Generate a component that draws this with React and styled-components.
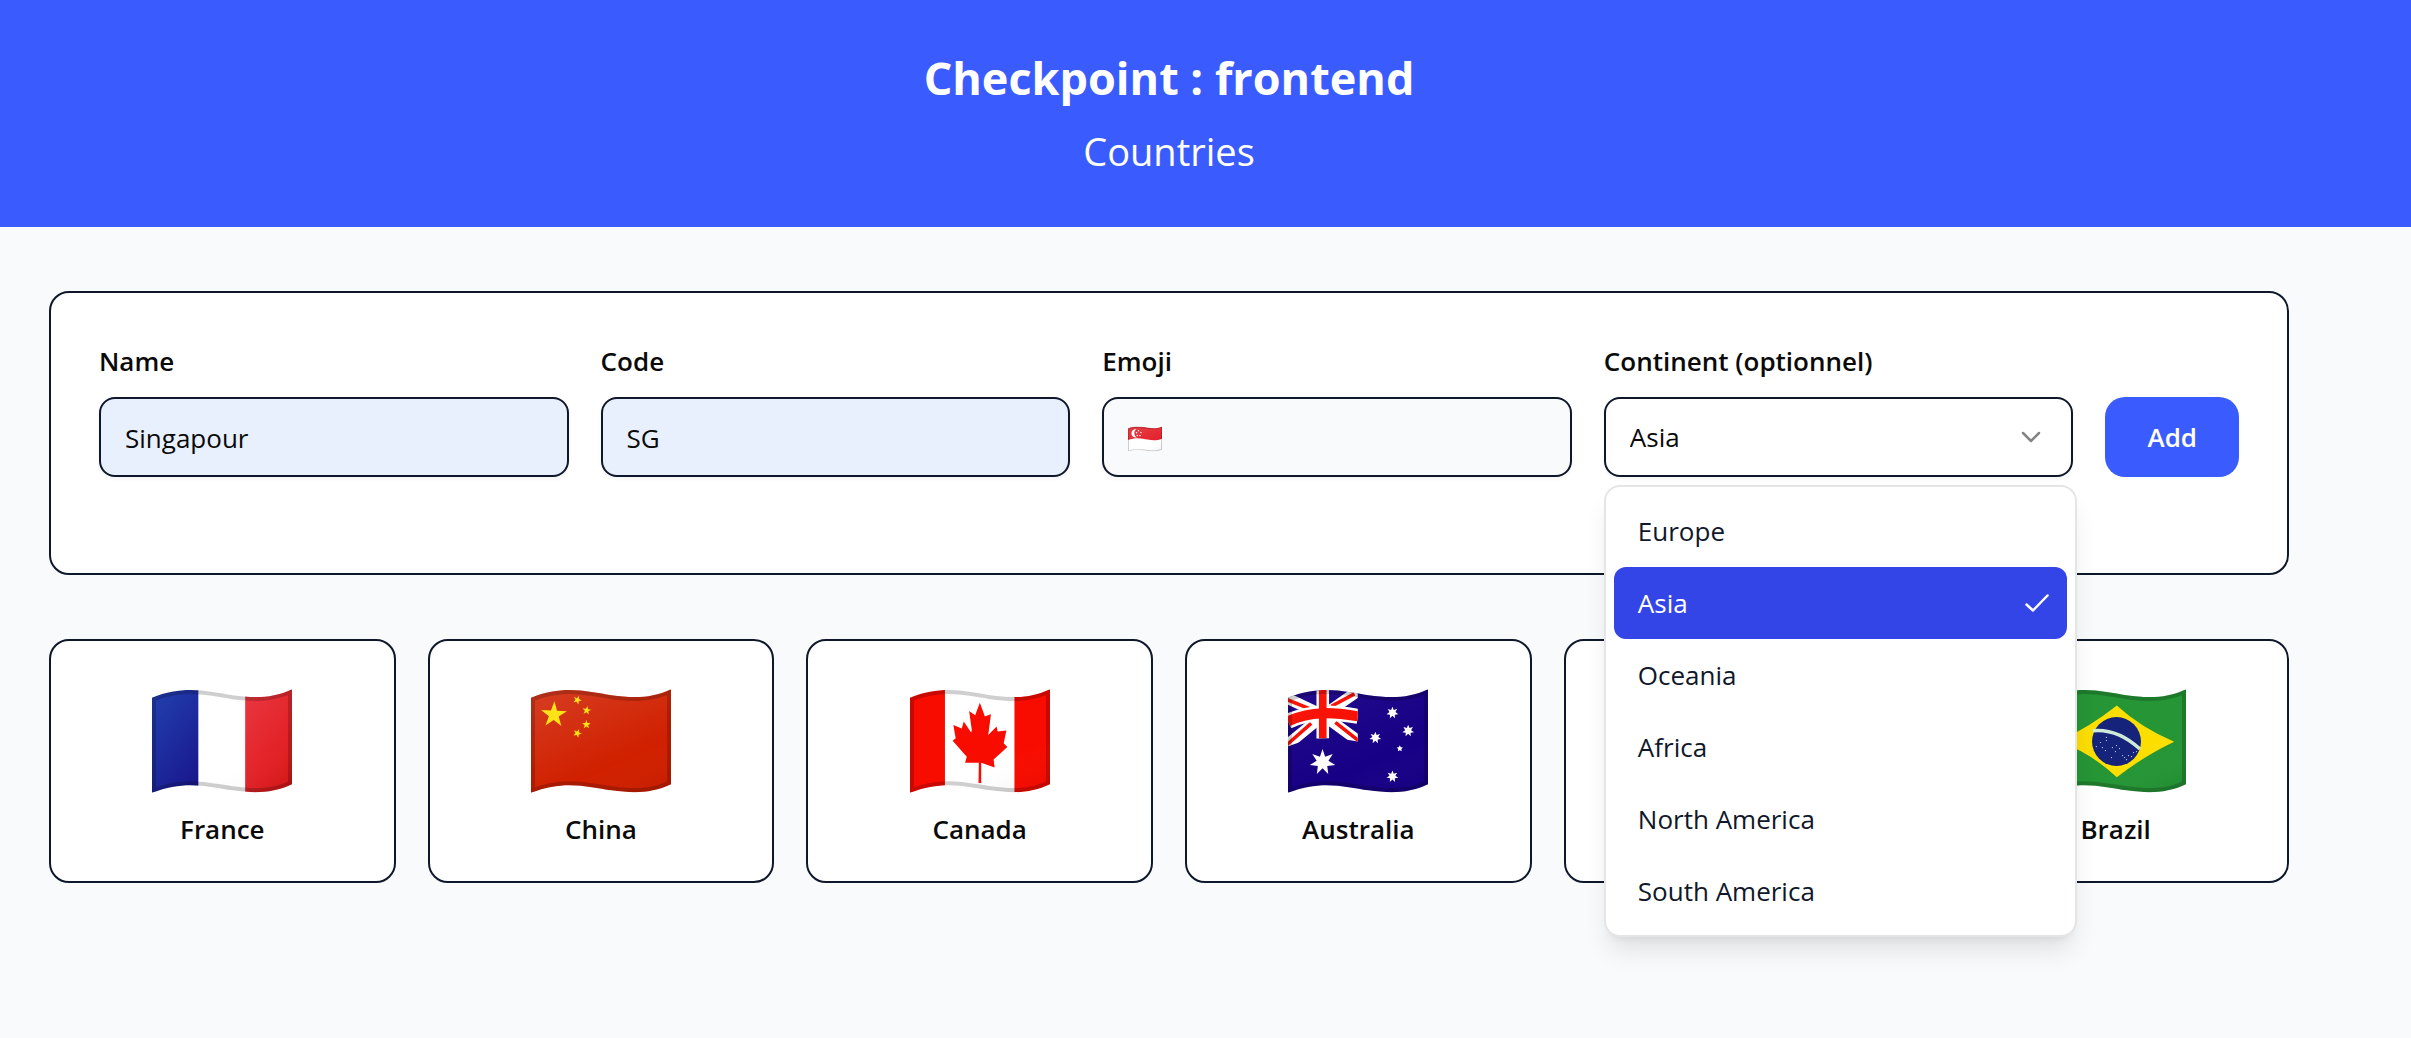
import React, { useId, useState } from "react";
import styled, { createGlobalStyle, css } from "styled-components";

const GlobalStyle = createGlobalStyle`
  *, *::before, *::after { box-sizing: border-box; }
  body {
    margin: 0;
    min-height: 100vh;
    background: #f8fafc;
    color: #0a0a0a;
    font-family: "Open Sans", "Noto Sans", sans-serif;
    font-size: 26px;
    line-height: 40px;
  }
  button, input, select { font: inherit; color: inherit; }
`;

const Page = styled.div`
  min-height: 100vh;
`;

const Header = styled.header`
  display: flex;
  flex-direction: column;
  align-items: center;
  gap: 8px;
  padding: 44px 73px 44px 0;
  background: #3a5cff;
  color: #fff;
`;

const Title = styled.h1`
  margin: 0;
  font-size: 45px;
  line-height: 68px;
  font-weight: 700;
`;

const Subtitle = styled.p`
  margin: 0;
  font-size: 38px;
  line-height: 63px;
`;

const Main = styled.main`
  display: flex;
  flex-direction: column;
  gap: 64px;
  padding: 64px 122px 64px 49px;
`;

const panel = css`
  background: #fff;
  border: 2px solid #0f172a;
  border-radius: 20px;
`;

const Form = styled.form`
  ${panel}
  display: flex;
  align-items: flex-end;
  gap: 32px;
  padding: 48px 48px 96px;
`;

const Field = styled.div`
  position: relative;
  display: flex;
  flex: 1 1 0;
  flex-direction: column;
  gap: 16px;
  min-width: 0;
`;

const Label = styled.label`
  font-weight: 600;
`;

const fieldBox = css`
  width: 100%;
  height: 80px;
  border: 2px solid #0f172a;
  border-radius: 16px;
  box-shadow: 0 2px 4px rgba(0, 0, 0, 0.05);
`;

const TextInput = styled.input`
  ${fieldBox}
  padding: 2px 24px 0;
  background: #e8f0fe;
  outline: none;
`;

const FlagField = styled.div`
  ${fieldBox}
  display: flex;
  align-items: center;
  gap: 8px;
  padding: 4px 24px 0;
  background: #f8fafc;
`;

const BareInput = styled.input`
  flex: 1;
  min-width: 0;
  border: 0;
  padding: 0;
  background: none;
  outline: none;
`;

const SelectBox = styled.div`
  display: grid;
  align-items: center;
  > * { grid-area: 1 / 1; }
`;

const Select = styled.select`
  ${fieldBox}
  appearance: none;
  padding: 0 64px 0 24px;
  background: #fff;
  outline: none;
`;

const Chevron = styled.svg`
  justify-self: end;
  margin: 0 32px 0 0;
  width: 20px;
  height: 12px;
  pointer-events: none;
`;

const Menu = styled.ul`
  position: absolute;
  z-index: 1;
  top: calc(100% + 8px);
  left: 0;
  width: calc(100% + 4px);
  margin: 0;
  padding: 8px;
  list-style: none;
  color: #0f172a;
  background: #fff;
  border: 2px solid #e5e5e5;
  border-radius: 16px;
  box-shadow: 0 18px 26px -5px rgba(0, 0, 0, 0.1), 0 7px 10px -7px rgba(0, 0, 0, 0.1);
`;

const Option = styled.li`
  display: flex;
  align-items: center;
  justify-content: space-between;
  height: 72px;
  padding: 0 18px 0 24px;
  border-radius: 12px;
  cursor: pointer;
  color: ${(p) => (p.$active ? "#fff" : "inherit")};
  background: ${(p) => (p.$active ? "#3445e7" : "transparent")};
`;

const AddButton = styled.button`
  flex: none;
  height: 80px;
  padding: 0 42px;
  border: 0;
  border-radius: 20px;
  background: #3a5cff;
  color: #fff;
  font-weight: 600;
`;

const Grid = styled.section`
  display: grid;
  grid-template-columns: repeat(6, minmax(0, 1fr));
  gap: 32px;
`;

const Card = styled.article`
  ${panel}
  display: flex;
  flex-direction: column;
  align-items: center;
  gap: 16px;
  padding: 48px 0 32px;
  font-weight: 600;
`;

const FlagSvg = styled.svg`
  flex: none;
  display: block;
  width: ${(p) => (p.$small ? "34px" : "140px")};
  height: ${(p) => (p.$small ? "26px" : "104px")};
`;

const WAVE =
  "M0 8.5C33 -5 58 3 80 6S120 9 139 0V94.5C120 103.5 102 103.5 80 100.5S33 89.5 0 103Z";

function star(cx, cy, r, points, ratio, turn = 0) {
  return Array.from({ length: points * 2 }, (_, i) => {
    const a = (Math.PI * i) / points - Math.PI / 2 + turn;
    const d = i % 2 ? r * ratio : r;
    return `${(cx + d * Math.cos(a)).toFixed(2)},${(cy + d * Math.sin(a)).toFixed(2)}`;
  }).join(" ");
}

function Flag({ small, shine = 0.12, children }) {
  const id = useId();
  return (
    <FlagSvg $small={small} viewBox="0 0 139 103" aria-hidden="true">
      <defs>
        <clipPath id={`${id}c`}>
          <path d={WAVE} />
        </clipPath>
        <linearGradient id={`${id}g`} x1="0.2" y1="0" x2="0.8" y2="1">
          <stop offset="0" stopColor="#fff" stopOpacity={shine} />
          <stop offset="0.7" stopColor="#fff" stopOpacity="0" />
          <stop offset="1" stopColor="#000" stopOpacity="0.04" />
        </linearGradient>
      </defs>
      <g clipPath={`url(#${id}c)`}>
        {children}
        <path d={WAVE} fill={`url(#${id}g)`} />
        <path d={WAVE} fill="none" stroke="#000" strokeOpacity="0.19" strokeWidth="8" />
      </g>
    </FlagSvg>
  );
}

function France() {
  const id = useId();
  return (
    <Flag shine={0}>
      <defs>
        <linearGradient id={`${id}b`} x1="0.2" y1="0" x2="0.8" y2="1">
          <stop offset="0" stopColor="#213eae" />
          <stop offset="1" stopColor="#19178c" />
        </linearGradient>
        <linearGradient id={`${id}r`} x1="0.2" y1="0" x2="0.8" y2="1">
          <stop offset="0" stopColor="#e9353f" />
          <stop offset="1" stopColor="#de1819" />
        </linearGradient>
      </defs>
      <rect width="139" height="103" fill="#fff" />
      <rect width="46" height="103" fill={`url(#${id}b)`} />
      <rect x="92.5" width="47" height="103" fill={`url(#${id}r)`} />
    </Flag>
  );
}

function China() {
  return (
    <Flag>
      <rect width="139" height="103" fill="#d02000" />
      <g fill="#ffe000">
        <polygon points={star(22.7, 25.5, 13.5, 5, 0.38, 0.04)} />
        <polygon points={star(46, 10.8, 4.5, 5, 0.4, 0.4)} />
        <polygon points={star(55.3, 21.2, 4.5, 5, 0.4, 0.15)} />
        <polygon points={star(55, 35.2, 4.5, 5, 0.4, 0)} />
        <polygon points={star(46, 43.8, 4.5, 5, 0.4, 0.4)} />
      </g>
    </Flag>
  );
}

function Canada() {
  return (
    <Flag shine={0}>
      <rect width="139" height="103" fill="#fff" />
      <rect width="34.7" height="103" fill="#f80c00" />
      <rect x="103.7" width="36" height="103" fill="#f80c00" />
      <polygon
        transform="translate(-10.3 -9.5) scale(0.3333)"
        fill="#f80c00"
        points="239,69 254,110 272,103 264,165 289,140 292,155 318,152 310,190 321,201 280,238 283,262 243,248 243,308 235,308 236,248 195,248 200,230 158,182 167,175 160,135 185,146 191,125 213,158 215,150 207,94 225,106"
      />
    </Flag>
  );
}

function Australia() {
  const id = useId();
  return (
    <Flag shine={0.04}>
      <rect width="139" height="103" fill="#180086" />
      <clipPath id={id}>
        <path d="M0 0H69.3V52C46 48 24 47 0 57Z" />
      </clipPath>
      <g clipPath={`url(#${id})`} fill="none">
        <path d="M-3 8L35 26 72 53M-3 57L35 26 72 0" stroke="#fff" strokeWidth="11" />
        <path d="M-2 10L23 20M66 4.7L43 17M-2 56L23 34M47 33L71 52" stroke="#f80c00" strokeWidth="3.5" />
        <path d="M34.5 0V49" stroke="#fff" strokeWidth="12.5" />
        <path d="M0 32C23 21 46 23 69.5 27" stroke="#fff" strokeWidth="15" />
        <path d="M0 32C23 21 46 23 69.5 27" stroke="#f80c00" strokeWidth="10" />
        <path d="M34.5 0V48.7" stroke="#f80c00" strokeWidth="7.6" />
      </g>
      <g fill="#fff">
        <polygon points={star(34.3, 72.5, 13, 7, 0.46)} />
        <polygon points={star(103.7, 23.5, 6, 7, 0.5)} />
        <polygon points={star(119.3, 41.4, 6, 7, 0.5)} />
        <polygon points={star(86.7, 48.2, 6, 7, 0.5)} />
        <polygon points={star(111, 59, 3.3, 5, 0.5)} />
        <polygon points={star(103.7, 86.7, 6, 7, 0.5)} />
      </g>
    </Flag>
  );
}

const BRAZIL_STARS = [
  [50, 57], [54, 53], [56, 58], [60, 51], [59, 61], [66, 58], [70, 56],
  [73, 59], [69, 62], [60, 48], [65, 68], [78, 68], [82, 66], [80, 70],
  [85, 67], [87, 63], [76, 66], [90, 62], [77, 47],
];

function Brazil() {
  return (
    <Flag shine={0}>
      <rect width="139" height="103" fill="#259536" />
      <path d="M70.3 16.2Q94 38 127.3 52.2 98 66 70.3 87.5 43 62 12 52 43 38 70.3 16.2Z" fill="#fcde00" />
      <circle cx="70" cy="52" r="24.3" fill="#15247a" />
      <path d="M46.6 41.3Q71 39 93.3 59.5" fill="none" stroke="#cfead9" strokeWidth="3.4" />
      <g fill="#cdd6f0">
        {BRAZIL_STARS.map(([x, y]) => (
          <circle key={`${x}-${y}`} cx={x} cy={y} r="0.6" />
        ))}
      </g>
    </Flag>
  );
}

function Singapore() {
  return (
    <Flag small>
      <rect width="139" height="103" fill="#fff" />
      <path d="M0 0H139V50C120 58 102 58 80 54S33 43 0 56Z" fill="#e3222c" />
      <path d="M34 12A17 17 0 1 0 36 45A19 19 0 0 1 34 12Z" fill="#fff" />
      <g fill="#fff">
        <circle cx="43" cy="18" r="3" />
        <circle cx="53" cy="25" r="3" />
        <circle cx="49" cy="37" r="3" />
        <circle cx="38" cy="37" r="3" />
        <circle cx="35" cy="26" r="3" />
      </g>
    </Flag>
  );
}

const CONTINENTS = ["Europe", "Asia", "Oceania", "Africa", "North America", "South America"];

const COUNTRIES = [
  { name: "France", Icon: France },
  { name: "China", Icon: China },
  { name: "Canada", Icon: Canada },
  { name: "Australia", Icon: Australia },
  { name: "" },
  { name: "Brazil", Icon: Brazil },
];

export default function App() {
  const [name, setName] = useState("Singapour");
  const [code, setCode] = useState("SG");
  const [continent, setContinent] = useState("Asia");

  return (
    <Page>
      <GlobalStyle />
      <Header>
        <Title>Checkpoint : frontend</Title>
        <Subtitle>Countries</Subtitle>
      </Header>
      <Main>
        <Form onSubmit={(e) => e.preventDefault()}>
          <Field>
            <Label htmlFor="name">Name</Label>
            <TextInput id="name" value={name} onChange={(e) => setName(e.target.value)} />
          </Field>
          <Field>
            <Label htmlFor="code">Code</Label>
            <TextInput id="code" value={code} onChange={(e) => setCode(e.target.value)} />
          </Field>
          <Field>
            <Label htmlFor="emoji">Emoji</Label>
            <FlagField>
              <Singapore />
              <BareInput id="emoji" />
            </FlagField>
          </Field>
          <Field>
            <Label htmlFor="continent">Continent (optionnel)</Label>
            <SelectBox>
              <Select id="continent" value={continent} onChange={(e) => setContinent(e.target.value)}>
                {CONTINENTS.map((c) => (
                  <option key={c}>{c}</option>
                ))}
              </Select>
              <Chevron viewBox="0 0 20 12" fill="none" stroke="#858585" strokeWidth="2.5" strokeLinecap="round" strokeLinejoin="round" aria-hidden="true">
                <path d="M2 2l8 8 8-8" />
              </Chevron>
            </SelectBox>
            <Menu role="listbox" aria-label="Continent">
              {CONTINENTS.map((c) => (
                <Option
                  key={c}
                  role="option"
                  aria-selected={c === continent}
                  $active={c === continent}
                  onClick={() => setContinent(c)}
                >
                  {c}
                  {c === continent && (
                    <svg width="24" height="18" viewBox="0 0 24 18" fill="none" stroke="#fff" strokeWidth="2.5" strokeLinecap="round" strokeLinejoin="round" aria-hidden="true">
                      <path d="M1.5 10.5L8 16.5 22.5 1.5" />
                    </svg>
                  )}
                </Option>
              ))}
            </Menu>
          </Field>
          <AddButton type="submit">Add</AddButton>
        </Form>
        <Grid>
          {COUNTRIES.map(({ name: country, Icon }) => (
            <Card key={country}>
              {Icon && <Icon />}
              {country}
            </Card>
          ))}
        </Grid>
      </Main>
    </Page>
  );
}
